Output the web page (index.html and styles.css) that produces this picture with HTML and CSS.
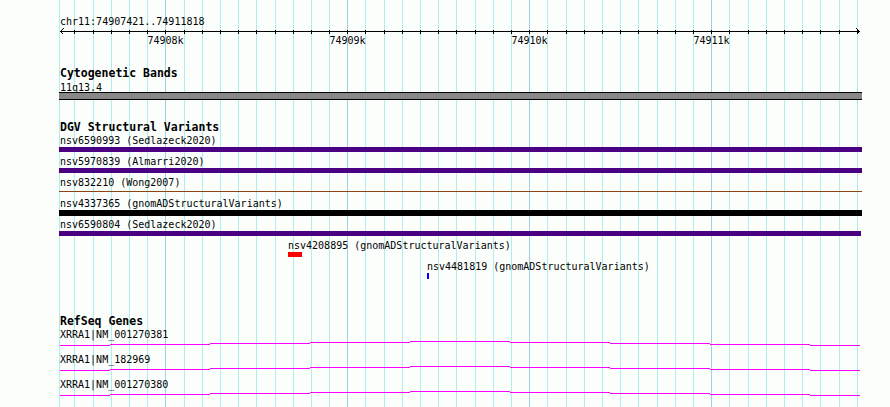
FILE: index.html
```html
<!DOCTYPE html>
<html lang="en">
<head>
  <meta charset="UTF-8">
  <title>chr11:74907421..74911818</title>
  <link rel="stylesheet" href="styles.css">
</head>
<body>
  <div class="browser">
    <!-- grid lines every 100bp, drawn under the tracks -->
    <svg class="grid" width="890" height="407">
      <path class="grid-minor" d="M59.5 0V407M74.5 0V407M93.5 0V407M111.5 0V407M129.5 0V407M147.5 0V407M184.5 0V407M202.5 0V407M220.5 0V407M238.5 0V407M256.5 0V407M275.5 0V407M293.5 0V407M311.5 0V407M329.5 0V407M365.5 0V407M384.5 0V407M402.5 0V407M420.5 0V407M438.5 0V407M456.5 0V407M475.5 0V407M493.5 0V407M511.5 0V407M547.5 0V407M566.5 0V407M584.5 0V407M602.5 0V407M620.5 0V407M638.5 0V407M657.5 0V407M675.5 0V407M693.5 0V407M729.5 0V407M748.5 0V407M766.5 0V407M784.5 0V407M802.5 0V407M820.5 0V407M839.5 0V407M857.5 0V407"/>
      <path class="grid-major" d="M165.5 0V407M347.5 0V407M529.5 0V407M711.5 0V407"/>
    </svg>

    <div class="tracks">
      <svg class="ruler" width="890" height="47">
        <text class="label" x="60" y="25">chr11:74907421..74911818</text>
        <path class="ruler-line" d="M60 31.5H860M63.5 28.5L60.5 31.5L63.5 34.5M856.5 28.5L859.5 31.5L856.5 34.5"/>
        <path class="ruler-line" d="M74.5 30V34M93.5 30V34M111.5 30V34M129.5 30V34M147.5 30V34M165.5 30V34M184.5 30V34M202.5 30V34M220.5 30V34M238.5 30V34M256.5 30V34M275.5 30V34M293.5 30V34M311.5 30V34M329.5 30V34M347.5 30V34M365.5 30V34M384.5 30V34M402.5 30V34M420.5 30V34M438.5 30V34M456.5 30V34M475.5 30V34M493.5 30V34M511.5 30V34M529.5 30V34M547.5 30V34M566.5 30V34M584.5 30V34M602.5 30V34M620.5 30V34M638.5 30V34M657.5 30V34M675.5 30V34M693.5 30V34M711.5 30V34M729.5 30V34M748.5 30V34M766.5 30V34M784.5 30V34M802.5 30V34M820.5 30V34M839.5 30V34M857.5 30V34"/>
        <text class="label tick-label" x="165.5" y="44">74908k</text>
        <text class="label tick-label" x="347.5" y="44">74909k</text>
        <text class="label tick-label" x="529.5" y="44">74910k</text>
        <text class="label tick-label" x="711.5" y="44">74911k</text>
      </svg>

      <section class="track">
        <h2 class="track-title">Cytogenetic Bands</h2>
        <svg class="track-body" width="890" height="22">
          <text class="label" x="60" y="12">11q13.4</text>
          <rect class="band" x="59" y="14" width="803" height="7"/>
          <path class="band-edge" d="M59 13.5H862M59 20.5H862"/>
        </svg>
      </section>

      <section class="track">
        <h2 class="track-title">DGV Structural Variants</h2>
        <svg class="track-body" width="890" height="162">
          <text class="label" x="60" y="11">nsv6590993 (Sedlazeck2020)</text>
          <rect class="sv-indigo" x="59" y="14" width="803" height="5"/>

          <text class="label" x="60" y="32">nsv5970839 (Almarri2020)</text>
          <rect class="sv-indigo" x="59" y="35" width="803" height="5"/>

          <text class="label" x="60" y="53">nsv832210 (Wong2007)</text>
          <rect class="sv-brown" x="59" y="58" width="803" height="1"/>

          <text class="label" x="60" y="74">nsv4337365 (gnomADStructuralVariants)</text>
          <rect class="sv-black" x="59" y="77" width="803" height="6"/>

          <text class="label" x="60" y="95">nsv6590804 (Sedlazeck2020)</text>
          <rect class="sv-indigo" x="59" y="98" width="802" height="5"/>

          <text class="label" x="288" y="116">nsv4208895 (gnomADStructuralVariants)</text>
          <rect class="sv-red" x="288" y="119" width="14" height="5"/>

          <text class="label" x="427" y="137">nsv4481819 (gnomADStructuralVariants)</text>
          <rect class="sv-blue" x="427" y="140" width="2" height="6"/>
        </svg>
      </section>

      <section class="track">
        <h2 class="track-title">RefSeq Genes</h2>
        <svg class="track-body" width="890" height="80">
          <defs>
            <path id="gene-line" class="gene" d="M60 18.5H110M110 17.5H210M210 16.5H310M310 15.5H410M410 14.5H510M510 15.5H610M610 16.5H710M710 17.5H810M810 18.5H860"/>
          </defs>
          <text class="label" x="60" y="11">XRRA1|NM_001270381</text>
          <use href="#gene-line"/>
          <text class="label" x="60" y="36">XRRA1|NM_182969</text>
          <use href="#gene-line" y="25"/>
          <text class="label" x="60" y="61">XRRA1|NM_001270380</text>
          <use href="#gene-line" y="50"/>
        </svg>
      </section>
    </div>
  </div>
</body>
</html>
```

FILE: styles.css
```css
/* page */
body {
  margin: 0;
  background-color: #fcfefc;
  font-family: "DejaVu Sans Mono", monospace;
}

.browser {
  position: relative;
  width: 890px;
  height: 407px;
  overflow: hidden;
}

/* grid */
.grid {
  position: absolute;
  top: 0;
  left: 0;
  z-index: 0;
  shape-rendering: crispEdges;
}

.grid-minor {
  stroke: #afeeee;
  stroke-width: 1;
}

.grid-major {
  stroke: #a0d0e4;
  stroke-width: 1;
}

.tracks {
  position: relative;
  z-index: 1;
}

/* ruler */
.ruler {
  display: block;
}

.ruler-line {
  fill: none;
  stroke: #000;
  stroke-width: 1;
  shape-rendering: crispEdges;
}

.tick-label {
  text-anchor: middle;
}

/* tracks */
.track {
  margin-top: 20px;
}

.track-title {
  margin: 0;
  padding-left: 60px;
  font-family: "DejaVu Sans Mono", monospace;
  font-size: 11.5px;
  font-weight: bold;
  line-height: 12px;
  color: #000;
}

.track-body {
  display: block;
  shape-rendering: crispEdges;
}

.label {
  font-family: "DejaVu Sans Mono", monospace;
  font-size: 10px;
  fill: #000;
}

/* features */
.band {
  fill: #888888;
}

.band-edge {
  stroke: #000;
  stroke-width: 1;
}

.sv-indigo {
  fill: #4b0082;
}

.sv-brown {
  fill: #8b4513;
}

.sv-black {
  fill: #000;
}

.sv-red {
  fill: #ff0000;
}

.sv-blue {
  fill: #0000ff;
}

.gene {
  fill: none;
  stroke: #ff00ff;
  stroke-width: 1;
}
```
